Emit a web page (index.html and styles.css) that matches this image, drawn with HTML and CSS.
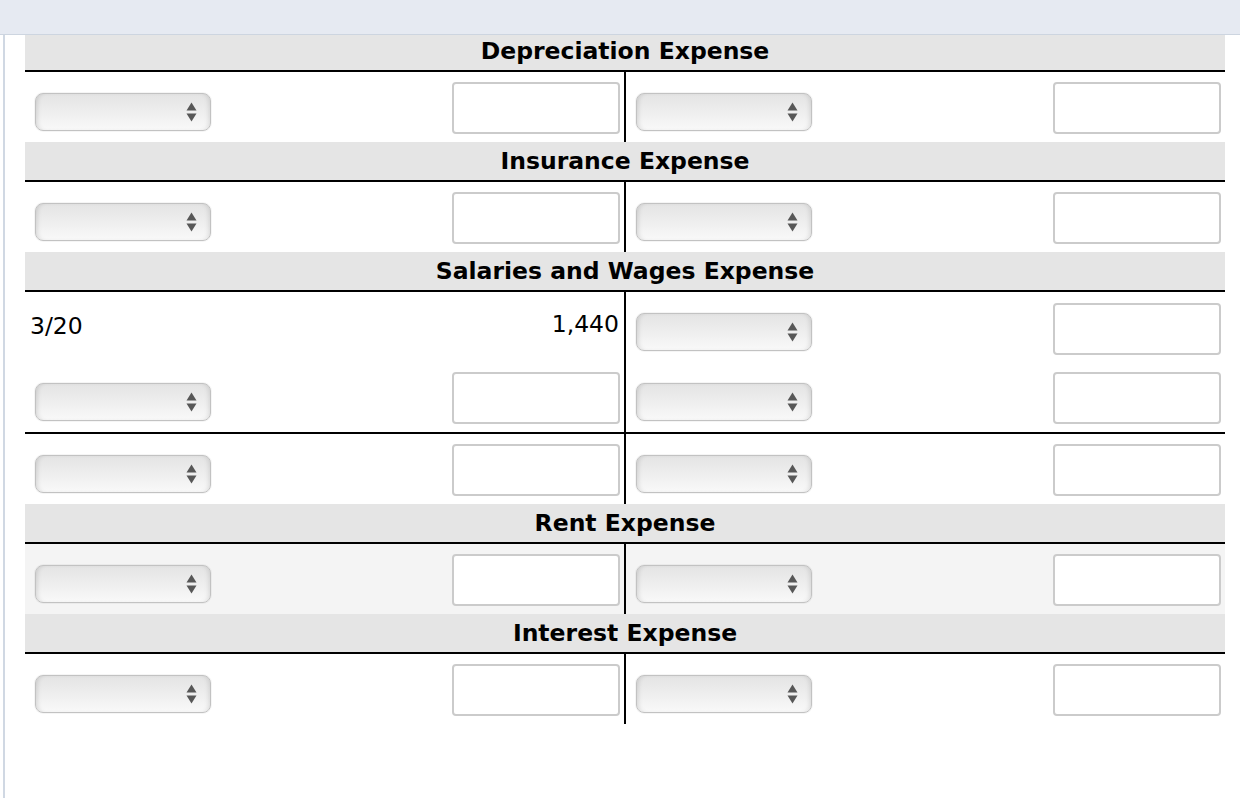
FILE: index.html
```html
<!DOCTYPE html>
<html>
<head>
<meta charset="utf-8">
<link rel="stylesheet" href="styles.css">
</head>
<body>
<div class="topbar"></div>
<div class="frame">
  <div class="ledger">
    <div class="band band-first">Depreciation Expense</div>
    <div class="row">
      <div class="side debit">
        <div class="select"><svg class="arr" width="11" height="20" viewBox="0 0 11 20"><path d="M0.5 8.5 L5.5 0.5 L10.5 8.5 Z M0.5 11.5 L10.5 11.5 L5.5 19.5 Z"/></svg></div>
        <input class="amt" type="text">
      </div>
      <div class="side credit">
        <div class="select"><svg class="arr" width="11" height="20" viewBox="0 0 11 20"><path d="M0.5 8.5 L5.5 0.5 L10.5 8.5 Z M0.5 11.5 L10.5 11.5 L5.5 19.5 Z"/></svg></div>
        <input class="amt" type="text">
      </div>
    </div>

    <div class="band">Insurance Expense</div>
    <div class="row">
      <div class="side debit">
        <div class="select"><svg class="arr" width="11" height="20" viewBox="0 0 11 20"><path d="M0.5 8.5 L5.5 0.5 L10.5 8.5 Z M0.5 11.5 L10.5 11.5 L5.5 19.5 Z"/></svg></div>
        <input class="amt" type="text">
      </div>
      <div class="side credit">
        <div class="select"><svg class="arr" width="11" height="20" viewBox="0 0 11 20"><path d="M0.5 8.5 L5.5 0.5 L10.5 8.5 Z M0.5 11.5 L10.5 11.5 L5.5 19.5 Z"/></svg></div>
        <input class="amt" type="text">
      </div>
    </div>

    <div class="band">Salaries and Wages Expense</div>
    <div class="row">
      <div class="side debit">
        <span class="date">3/20</span>
        <span class="value">1,440</span>
      </div>
      <div class="side credit">
        <div class="select"><svg class="arr" width="11" height="20" viewBox="0 0 11 20"><path d="M0.5 8.5 L5.5 0.5 L10.5 8.5 Z M0.5 11.5 L10.5 11.5 L5.5 19.5 Z"/></svg></div>
        <input class="amt amt-low" type="text">
      </div>
    </div>
    <div class="row">
      <div class="side debit">
        <div class="select"><svg class="arr" width="11" height="20" viewBox="0 0 11 20"><path d="M0.5 8.5 L5.5 0.5 L10.5 8.5 Z M0.5 11.5 L10.5 11.5 L5.5 19.5 Z"/></svg></div>
        <input class="amt" type="text">
      </div>
      <div class="side credit">
        <div class="select"><svg class="arr" width="11" height="20" viewBox="0 0 11 20"><path d="M0.5 8.5 L5.5 0.5 L10.5 8.5 Z M0.5 11.5 L10.5 11.5 L5.5 19.5 Z"/></svg></div>
        <input class="amt" type="text">
      </div>
    </div>
    <div class="row total">
      <div class="side debit">
        <div class="select"><svg class="arr" width="11" height="20" viewBox="0 0 11 20"><path d="M0.5 8.5 L5.5 0.5 L10.5 8.5 Z M0.5 11.5 L10.5 11.5 L5.5 19.5 Z"/></svg></div>
        <input class="amt" type="text">
      </div>
      <div class="side credit">
        <div class="select"><svg class="arr" width="11" height="20" viewBox="0 0 11 20"><path d="M0.5 8.5 L5.5 0.5 L10.5 8.5 Z M0.5 11.5 L10.5 11.5 L5.5 19.5 Z"/></svg></div>
        <input class="amt" type="text">
      </div>
    </div>

    <div class="band">Rent Expense</div>
    <div class="row shaded">
      <div class="side debit">
        <div class="select"><svg class="arr" width="11" height="20" viewBox="0 0 11 20"><path d="M0.5 8.5 L5.5 0.5 L10.5 8.5 Z M0.5 11.5 L10.5 11.5 L5.5 19.5 Z"/></svg></div>
        <input class="amt" type="text">
      </div>
      <div class="side credit">
        <div class="select"><svg class="arr" width="11" height="20" viewBox="0 0 11 20"><path d="M0.5 8.5 L5.5 0.5 L10.5 8.5 Z M0.5 11.5 L10.5 11.5 L5.5 19.5 Z"/></svg></div>
        <input class="amt" type="text">
      </div>
    </div>

    <div class="band">Interest Expense</div>
    <div class="row">
      <div class="side debit">
        <div class="select"><svg class="arr" width="11" height="20" viewBox="0 0 11 20"><path d="M0.5 8.5 L5.5 0.5 L10.5 8.5 Z M0.5 11.5 L10.5 11.5 L5.5 19.5 Z"/></svg></div>
        <input class="amt" type="text">
      </div>
      <div class="side credit">
        <div class="select"><svg class="arr" width="11" height="20" viewBox="0 0 11 20"><path d="M0.5 8.5 L5.5 0.5 L10.5 8.5 Z M0.5 11.5 L10.5 11.5 L5.5 19.5 Z"/></svg></div>
        <input class="amt" type="text">
      </div>
    </div>
  </div>
</div>
</body>
</html>
```

FILE: styles.css
```css
* { box-sizing: border-box; }

html, body {
  margin: 0;
  padding: 0;
  background: #ffffff;
  height: 100%;
  overflow: hidden;
}

body {
  font-family: "DejaVu Sans", Verdana, sans-serif;
  color: #000;
}

.topbar {
  height: 35px;
  background: #e6eaf2;
  border-bottom: 1px solid #cdd5e0;
}

.frame {
  margin-left: 3px;
  border-left: 2px solid #d0d8e3;
  padding-left: 20px;
  height: calc(100% - 35px);
}

.ledger {
  width: 1200px;
}

.band {
  height: 40px;
  background: #e5e5e5;
  border-bottom: 2px solid #000;
  text-align: center;
  font-weight: bold;
  font-size: 23.5px;
  line-height: 38px;
}

.band-first {
  height: 37px;
  line-height: 33px;
}

.row {
  display: grid;
  grid-template-columns: 601px 599px;
  height: 70px;
}

.row.total {
  border-top: 2px solid #000;
  height: 72px;
}

.row.shaded {
  background: #f4f4f4;
}

.side {
  display: flex;
  align-items: flex-start;
  justify-content: space-between;
  padding-left: 10px;
  padding-right: 4px;
}

.debit {
  border-right: 2px solid #000;
}

.select {
  width: 176px;
  height: 38px;
  margin-top: 21px;
  border: 1px solid #c2c2c2;
  border-radius: 8px;
  background: linear-gradient(#e4e4e4 0%, #ededed 45%, #f9f9f9 100%);
  box-shadow: inset 4px 0 5px -3px rgba(0,0,0,0.14), inset -4px 0 5px -3px rgba(0,0,0,0.12), 0 0 0 1px rgba(0,0,0,0.04);
  display: flex;
  align-items: center;
  justify-content: flex-end;
  padding-right: 13px;
}

.arr {
  fill: #575757;
  display: block;
}

.amt {
  width: 168px;
  height: 52px;
  margin: 10px 0 0 0;
  border: 2px solid #cbcbcb;
  border-radius: 4px;
  background: #fff;
  padding: 0;
  font: inherit;
}

.amt-low {
  margin-top: 11px;
}

.date {
  font-size: 23.5px;
  line-height: 27px;
  padding-top: 21px;
  margin-left: -5px;
}

.value {
  font-size: 23.5px;
  line-height: 27px;
  padding-top: 19px;
  margin-right: 1px;
}
```
